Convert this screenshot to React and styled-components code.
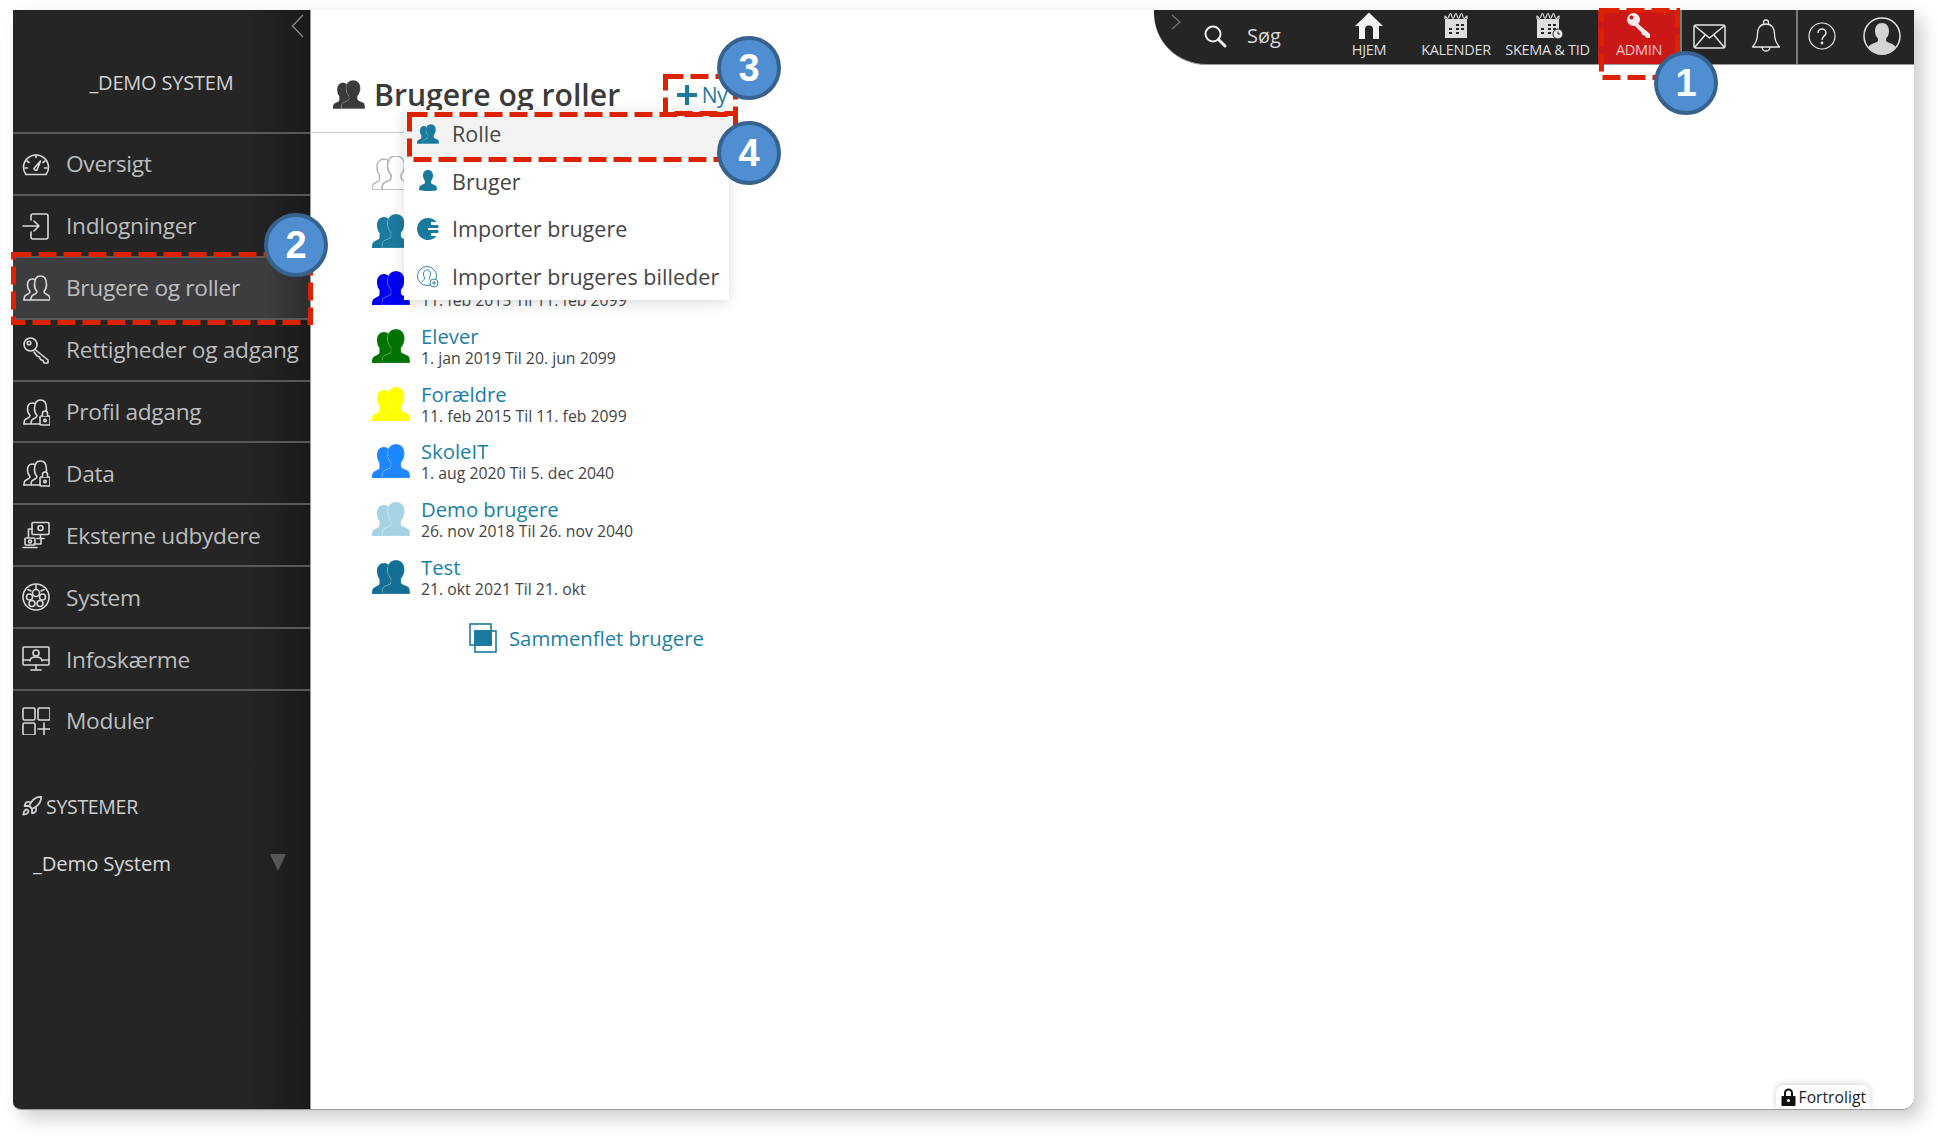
import React from 'react';
import styled, { createGlobalStyle } from 'styled-components';
import { Rocket } from 'lucide-react';

const Global = createGlobalStyle`
  html, body { margin: 0; height: 100%; overflow: hidden; background: #fff; }
  body { font-family: "Open Sans", "Liberation Sans", sans-serif; }
`

const Page = styled.div`
  position: relative;
  width: 1938px;
  height: 1138px;
  padding: 10px 24px 29px 13px;
  box-sizing: border-box;
`

const Frame = styled.div`
  display: flex;
  height: 100%;
  background: #fff;
  border-bottom: 1px solid #999;
  border-radius: 0 0 12px 8px;
  box-shadow: 8px 8px 18px rgba(0, 0, 0, .2);
  overflow: hidden;
`

const Sidebar = styled.aside`
  position: relative;
  flex: 0 0 298px;
  display: flex;
  flex-direction: column;
  background: linear-gradient(90deg, #252526 78%, #1a1a1b 100%);
  border-right: 1px solid #999;
  box-sizing: border-box;
  color: #c4c4c4;
`

const Collapse = styled.svg`
  position: absolute;
  top: 4px;
  right: 6px;
  width: 13px;
  height: 24px;
`

const Brand = styled.div`
  height: 122px;
  display: flex;
  align-items: center;
  justify-content: center;
  padding-top: 23px;
  box-sizing: border-box;
  font-size: 20px;
  letter-spacing: -.2px;
  color: #d2d2d2;
`

const NavRow = styled.div`
  height: 61.9px;
  display: flex;
  align-items: center;
  gap: 16px;
  padding-left: 9px;
  box-sizing: border-box;
  border-top: 2px solid #58585a;
  font-size: 22.7px;
  letter-spacing: -.3px;
  color: #bdbdbd;
  background: ${p => (p.$active ? 'linear-gradient(90deg, #3d3d3f 85%, #2d2d2e 100%)' : 'transparent')};
  svg { flex: 0 0 28px; width: 28px; height: 28px; color: #d8d8d8; }
`

const SystemsHead = styled.div`
  margin-top: 42px;
  display: flex;
  align-items: center;
  gap: 3px;
  padding-left: 8px;
  font-size: 19.5px;
  letter-spacing: -.3px;
  color: #cfcfcf;
  svg { width: 22px; height: 22px; }
`

const SystemRow = styled.div`
  margin-top: 29px;
  display: flex;
  align-items: center;
  justify-content: space-between;
  padding: 0 24px 0 20px;
  font-size: 20.3px;
  letter-spacing: -.15px;
  color: #d8d8d8;
`

const Caret = styled.span`
  width: 0;
  height: 0;
  border-left: 8px solid transparent;
  border-right: 8px solid transparent;
  border-top: 17px solid #565656;
`

const Main = styled.main`
  position: relative;
  flex: 1;
  display: flex;
  flex-direction: column;
  min-width: 0;
`

const Topbar = styled.header`
  align-self: flex-end;
  width: 760px;
  height: 55px;
  flex: 0 0 55px;
  display: flex;
  background: #252526;
  border-bottom: 1px solid #999;
  border-bottom-left-radius: 52px;
  box-sizing: border-box;
  color: #e4e4e4;
`

const SearchArea = styled.div`
  flex: 0 0 179px;
  display: flex;
  align-items: center;
  padding: 0 0 3px 17px;
  box-sizing: border-box;
  font-size: 20px;
  color: #d8d8d8;
  > svg:first-child { align-self: flex-start; margin-top: 4px; width: 11px; height: 16px; }
`

const SearchIcon = styled.svg`
  width: 24px;
  height: 24px;
  margin: 0 20px 0 21px;
`

const Tab = styled.div`
  flex: 0 0 ${p => p.$w}px;
  min-width: 0;
  display: flex;
  flex-direction: column;
  align-items: center;
  justify-content: space-between;
  padding: 2px 0 5px;
  box-sizing: border-box;
  font-size: 14.5px;
  letter-spacing: -.3px;
  line-height: 18px;
  white-space: nowrap;
  color: #dedede;
  svg { width: 30px; height: 27px; }
`

const AdminTab = styled(Tab)`
  margin-left: auto;
  background: #cc1717;
  color: #f1c7c7;
  svg { color: #f3e9e9; }
`

const IconGroup = styled.div`
  flex: 0 0 ${p => p.$w}px;
  display: flex;
  align-items: center;
  gap: ${p => p.$gap}px;
  padding: 0 0 2px ${p => p.$pad}px;
  border-left: 2px solid #7a7a7a;
  box-sizing: border-box;
  color: #e6e6e6;
`

const PageHead = styled.div`
  margin-left: 1px;
  width: 416px;
  height: 68px;
  flex: 0 0 68px;
  display: flex;
  align-items: center;
  gap: 9px;
  padding: 0 1px 8px 21px;
  box-sizing: border-box;
  border-bottom: 1px solid #cfcfcf;
`

const Title = styled.h1`
  margin: 0;
  font-size: 30.2px;
  font-weight: 600;
  color: #3b3b3b;
`

const NewLink = styled.a`
  margin-left: auto;
  display: flex;
  align-items: center;
  gap: 5px;
  font-size: 21px;
  letter-spacing: -.5px;
  color: #1b7a9e;
`

const GroupList = styled.div`
  padding: 15px 0 0 61px;
`

const GroupRow = styled.div`
  height: 57.7px;
  display: flex;
  gap: 11px;
  > svg { flex: 0 0 38px; width: 38px; height: 34px; margin-top: 8px; }
`

const GroupName = styled.div`
  height: 27px;
  font-size: 20.3px;
  line-height: 30px;
  color: #1b7fa3;
`

const GroupDates = styled.div`
  font-size: 15.8px;
  line-height: 20px;
  color: #444;
`

const MergeLink = styled.a`
  margin: 13px 0 0 158px;
  display: flex;
  align-items: center;
  gap: 12px;
  font-size: 20.3px;
  color: #1b7fa3;
`

const Menu = styled.div`
  position: absolute;
  top: 100px;
  left: 93px;
  width: 325px;
  background: #fff;
  border-radius: 0 0 8px 8px;
  box-shadow: 0 3px 14px rgba(0, 0, 0, .14);
`

const MenuItem = styled.div`
  height: 47.6px;
  display: flex;
  align-items: center;
  gap: 13px;
  padding-left: 13px;
  box-sizing: border-box;
  font-size: 21.5px;
  letter-spacing: .05px;
  white-space: nowrap;
  color: #454545;
  background: ${p => (p.$active ? '#f3f3f3' : '#fff')};
  svg { flex: 0 0 22px; width: 22px; height: 22px; color: #1a7a9e; }
`

const Confidential = styled.div`
  margin: auto 44px 0 auto;
  height: 24px;
  display: flex;
  align-items: center;
  gap: 3px;
  padding: 0 4px 0 5px;
  background: #fff;
  border-radius: 8px 8px 0 0;
  box-shadow: 0 -1px 6px rgba(0, 0, 0, .18);
  font-size: 15.7px;
  color: #222;
  svg { width: 15px; height: 18px; }
`

const DashBox = styled.svg`
  position: absolute;
  left: ${p => p.$x}px;
  top: ${p => p.$y}px;
  width: ${p => p.$w}px;
  height: ${p => p.$h}px;
  overflow: visible;
`

const Badge = styled.div`
  position: absolute;
  left: ${p => p.$x}px;
  top: ${p => p.$y}px;
  width: 64px;
  height: 64px;
  display: flex;
  align-items: center;
  justify-content: center;
  box-sizing: border-box;
  border-radius: 50%;
  background: #4f8fd1;
  border: 4px solid #37628f;
  font-family: "Liberation Sans", Arial, sans-serif;
  font-size: 38px;
  font-weight: 700;
  color: #fff;
`

const Line = ({ children }) => (
  <svg viewBox="0 0 28 28" fill="none" stroke="currentColor" strokeWidth="1.6" strokeLinecap="round" strokeLinejoin="round">
    {children}
  </svg>
)

const FRONT = 'M24 0c5 0 8.5 3.6 8.5 9.5 0 4-1.6 7.2-3.5 9.2v3.3c0 1.4.8 2 2.2 2.6l4.3 2c1.6.8 2.5 2 2.5 7.4H10c0-5.4.9-6.6 2.5-7.4l4.3-2c1.4-.6 2.2-1.2 2.2-2.6v-3.3c-1.9-2-3.5-5.2-3.5-9.2C15.5 3.6 19 0 24 0z'
const BACK = 'M12 3c2 0 3.6.7 4.8 2-1 1.300-1.300 2.800-1.300 4.500 0 4 1.600 7.200 3.500 9.200v3.300c0 1.400-.8 2-2.200 2.600l-4.300 2C11 27.400 10 29 10 34H0c0-4.600.8-5.800 2.300-6.600l3.500-1.800c1.200-.6 1.700-1.200 1.700-2.400V19C6 17.500 5 14.500 5 11 5 6 8 3 12 3z'

const People = ({ color, outline }) => (
  <svg viewBox="0 0 38 34">
    {outline ? (
      <g fill="none" stroke={color} strokeWidth="1.4">
        <path d={FRONT} />
        <path d={BACK} />
      </g>
    ) : (
      <g fill={color}>
        <path d={BACK} />
        <path d={FRONT} stroke="#fff" strokeOpacity=".35" strokeWidth=".6" />
      </g>
    )}
  </svg>
)

const PeopleLine = ({ lock }) => (
  <Line>
    <path d="M2 26c0-4 1-4.500 4-6 1.500-.7 2-1.300 2-2.500-1.500-1.500-2.500-3.500-2.500-6.500C5.500 7 7.500 5 10.500 5c1 0 1.800.2 2.500.6" />
    <path d="M9 26c0-4 1-4.500 4-6 1.500-.7 2-1.300 2-2.500-1.500-1.500-2.500-3.500-2.500-7C12.500 5 15 2 18.500 2S24.500 5 24.500 10.500c0 3.500-1 5.500-2.500 7 0 1.200.5 1.800 2 2.500 3 1.500 4 2 4 6H2" />
    {lock && (
      <g fill="#252526">
        <rect x="18" y="18" width="10" height="9" rx="1" />
        <path d="M20.500 18v-2.500a2.500 2.500 0 0 1 5 0V18" />
        <circle cx="23" cy="22.500" r="1.200" />
      </g>
    )}
  </Line>
)

const nav = [
  ['Oversigt', <Line key="i">
    <path d="M4 24.500C2.500 22.500 1.500 20 1.500 17.500a12.500 12.500 0 0 1 25 0c0 2.500-1 5-2.500 7" />
    <path d="M4 24.500h20M14 5v2.500M5 11l2 1.500M23 11l-2 1.500M3 18h2.500M25 18h-2.500" />
    <path d="M12 18.500 18.500 11l-3.500 9a2 2 0 0 1-3-1.500z" />
  </Line>],
  ['Indlogninger', <Line key="i">
    <path d="M9 8V4a2 2 0 0 1 2-2h13a2 2 0 0 1 2 2v21a2 2 0 0 1-2 2H11a2 2 0 0 1-2-2v-5" />
    <path d="M1 14h16M12 9l5 5-5 5" />
  </Line>],
  ['Brugere og roller', <PeopleLine key="i" />],
  ['Rettigheder og adgang', <Line key="i">
    <circle cx="8.500" cy="8.500" r="6.500" />
    <circle cx="7" cy="7" r="1.800" />
    <path d="M13 13.500 26 24v3h-4l-1-2.500-2.500-1-1-2.500-2.500-1-3-4" />
  </Line>],
  ['Profil adgang', <PeopleLine key="i" lock />],
  ['Data', <PeopleLine key="i" lock />],
  ['Eksterne udbydere', <Line key="i">
    <rect x="10" y="1.500" width="17" height="12" rx="1" />
    <circle cx="18.500" cy="7" r="2.500" />
    <path d="M18.500 14v3M15 17.500h7M10 8H6.500v8M19 18v5h-7" />
    <rect x="3" y="17" width="10" height="7" rx="1" />
    <path d="M1 26.500h14" />
    <circle cx="8" cy="20.500" r="1.500" />
  </Line>],
  ['System', <Line key="i">
    <circle cx="14" cy="14" r="13" />
    <circle cx="14" cy="10" r="3.500" />
    <circle cx="7.500" cy="14" r="3" />
    <circle cx="20.500" cy="14" r="3" />
    <circle cx="10" cy="20.500" r="3" />
    <circle cx="18" cy="20.500" r="3" />
    <path d="M6 6.500 9 8M22 6.500 19 8M14 2v4" />
  </Line>],
  ['Infoskærme', <Line key="i">
    <rect x="1" y="2" width="26" height="18" rx="1" />
    <circle cx="14" cy="8" r="3" />
    <path d="M8 16c0-3 3-4 6-4s6 1 6 4M1 15h6M21 15h6M14 20v4M9 25h10" />
  </Line>],
  ['Moduler', <Line key="i">
    <rect x="1" y="1" width="12" height="12" rx="1.500" />
    <rect x="16" y="1" width="12" height="12" rx="1.500" />
    <rect x="1" y="16" width="12" height="12" rx="1.500" />
    <path d="M22 16v12M16 22h12" />
  </Line>],
]

const groups = [
  { color: '#b5b5b5', outline: true },
  { color: '#1b7a9e' },
  { color: '#0000f0', dates: '11. feb 2015 Til 11. feb 2099' },
  { color: '#007300', name: 'Elever', dates: '1. jan 2019 Til 20. jun 2099' },
  { color: '#ffff00', name: 'Forældre', dates: '11. feb 2015 Til 11. feb 2099' },
  { color: '#1e87ff', name: 'SkoleIT', dates: '1. aug 2020 Til 5. dec 2040' },
  { color: '#a6d3e4', name: 'Demo brugere', dates: '26. nov 2018 Til 26. nov 2040' },
  { color: '#146f96', name: 'Test', dates: '21. okt 2021 Til 21. okt' },
]

const CalendarIcon = ({ clock }) => (
  <svg viewBox="0 0 30 27">
    <path fill="currentColor" d="M4 7h22v19H4z" />
    <path fill="none" stroke="currentColor" strokeWidth="1.200" d="M4 7V4c1.500 0 1 2.500 2.500 2.500S8 1.500 9.500 1.500 10.500 6.500 12 6.500s1.500-5 3-5 1 5 2.500 5 1.500-5 3-5 1 5 2.500 5S25 4 26 4v3" />
    <path fill="#252526" d="M15 12h3v2h-3zM20 12h3v2h-3zM8 16h3v2H8zM15 16h3v2h-3zM20 16h3v2h-3zM8 20h3v2H8zM15 20h3v2h-3z" />
    {clock && (
      <g>
        <circle cx="25" cy="22" r="5" fill="#e8e8e8" stroke="#252526" />
        <path d="M25 19.500V22h2" fill="none" stroke="#252526" />
      </g>
    )}
  </svg>
)

const Dashes = ({ x, y, w, h }) => (
  <DashBox $x={x} $y={y} $w={w} $h={h} viewBox={`0 0 ${w} ${h}`}>
    <rect x="2.500" y="2.500" width={w - 5} height={h - 5} fill="none" stroke="#dd2200" strokeWidth="5" strokeDasharray="18 7" />
  </DashBox>
)

export default function App() {
  return (
    <Page>
      <Global />
      <Frame>
        <Sidebar>
          <Collapse viewBox="0 0 13 24" fill="none" stroke="#8c8c8c" strokeWidth="1.300"><path d="M12 1 1.500 12 12 23" /></Collapse>
          <Brand>_DEMO SYSTEM</Brand>
          {nav.map(([label, icon], idx) =>
            <NavRow key={idx} $active={label === 'Brugere og roller'}>
              {icon}
              {label}
            </NavRow>
          )}
          <SystemsHead><Rocket strokeWidth={2} />SYSTEMER</SystemsHead>
          <SystemRow>_Demo System<Caret /></SystemRow>
        </Sidebar>
        <Main>
          <Topbar>
            <SearchArea>
              <svg viewBox="0 0 11 16" fill="none" stroke="#777" strokeWidth="1.200"><path d="M1 1l8 7-8 7" /></svg>
              <SearchIcon viewBox="0 0 24 24" fill="none" stroke="#eee">
                <circle cx="10" cy="10" r="7.500" strokeWidth="2" />
                <path d="M15.500 15.500 22 22" strokeWidth="3" strokeLinecap="round" />
              </SearchIcon>
              Søg
            </SearchArea>
            <Tab $w={72}>
              <svg viewBox="0 0 30 27"><path fill="#f2f2f2" d="M15 .5 29 14h-4v13h-6V17.500a4 4 0 0 0-8 0V27H5V14H1z" /></svg>
              HJEM
            </Tab>
            <Tab $w={102}><CalendarIcon />KALENDER</Tab>
            <Tab $w={81}><CalendarIcon clock />SKEMA &amp; TID</Tab>
            <AdminTab $w={82}>
              <svg viewBox="0 0 30 27">
                <circle cx="9.500" cy="7.500" r="6.500" fill="currentColor" />
                <path fill="currentColor" d="M12 10 26 22v4h-3.500l-2-2.500-2.500-.5-.5-2.500L10 13z" />
                <circle cx="7.500" cy="5.500" r="1.900" fill="#cc1717" />
              </svg>
              ADMIN
            </AdminTab>
            <IconGroup $w={116} $gap={25} $pad={11}>
              <svg width="33" height="25" viewBox="0 0 33 25" fill="none" stroke="currentColor" strokeWidth="1.500">
                <rect x="1" y="1" width="31" height="23" rx="2" />
                <path d="M2 2 16.500 14 31 2M2 23l10.500-12.500M31 23 20.500 10.500" />
              </svg>
              <svg width="30" height="34" viewBox="0 0 30 34" fill="none" stroke="currentColor" strokeWidth="1.300" strokeLinejoin="round">
                <path d="M15 5c-6 0-8.500 4.500-8.500 10 0 6-1.500 9-5 13h27c-3.500-4-5-7-5-13 0-5.500-2.500-10-8.500-10z" />
                <path d="M12.500 5.500V3.500a2.500 2.500 0 0 1 5 0v2M11 28c0 2.500 2 4 4 4s4-1.500 4-4" />
              </svg>
            </IconGroup>
            <IconGroup $w={118} $gap={27} $pad={10}>
              <svg width="28" height="28" viewBox="0 0 28 28" fill="none" stroke="currentColor" strokeWidth="1.200">
                <circle cx="14" cy="14" r="13" />
                <path d="M10 11c0-2.500 2-4 4-4s4 1.500 4 4c0 3-4 3-4 7" strokeWidth="1.500" />
                <circle cx="14" cy="21" r=".8" fill="currentColor" />
              </svg>
              <svg width="38" height="38" viewBox="0 0 38 38">
                <circle cx="19" cy="19" r="18" fill="#252526" stroke="#e4e4e4" strokeWidth="1.500" />
                <path fill="#d4d4d4" d="M19 6c4.500 0 7 3.500 7 8 0 3-1 5.500-3 7.500v2c0 1 2 2 5 3 2.500 1 4 2 5 4a17 17 0 0 1-28 0c1-2 2.500-3 5-4 3-1 5-2 5-3v-2c-2-2-3-4.500-3-7.500 0-4.500 2.500-8 7-8z" />
              </svg>
            </IconGroup>
          </Topbar>
          <PageHead>
            <svg width="32" height="29" viewBox="0 0 38 34"><g fill="#3a3a3a"><path d={BACK} /><path d={FRONT} stroke="#fff" strokeOpacity=".35" strokeWidth=".6" /></g></svg>
            <Title>Brugere og roller</Title>
            <NewLink>
              <svg width="20" height="20" viewBox="0 0 20 20"><path fill="#1b7a9e" d="M8 0h4v8h8v4h-8v8H8v-8H0V8h8z" /></svg>
              Ny
            </NewLink>
          </PageHead>
          <GroupList>
            {groups.map((g, idx) =>
              <GroupRow key={idx}>
                <People color={g.color} outline={g.outline} />
                <div>
                  <GroupName>{g.name}</GroupName>
                  <GroupDates>{g.dates}</GroupDates>
                </div>
              </GroupRow>
            )}
          </GroupList>
          <MergeLink>
            <svg width="28" height="30" viewBox="0 0 28 30" fill="none" stroke="#1b7a9e" strokeWidth="1.600">
              <rect x="1" y="1" width="21" height="21" />
              <rect x="6" y="8" width="21" height="21" />
              <rect x="6" y="8" width="16" height="14" fill="#1b7a9e" />
            </svg>
            Sammenflet brugere
          </MergeLink>
          <Menu>
            <MenuItem $active>
              <svg viewBox="0 0 38 34"><g fill="currentColor"><path d={BACK} /><path d={FRONT} stroke="#fff" strokeOpacity=".35" strokeWidth=".6" /></g></svg>
              Rolle
            </MenuItem>
            <MenuItem>
              <svg viewBox="0 0 22 22"><path fill="currentColor" d="M11 0c3 0 5 2.200 5 5.500 0 2.500-1 4.500-2 5.500v1.500c0 1 1 1.600 3 2.200 2 .7 3 1.800 3 5.300-2 1.300-16 1.300-18 0 0-3.500 1-4.600 3-5.300 2-.6 3-1.200 3-2.200V11C7 10 6 8 6 5.500 6 2.200 8 0 11 0z" /></svg>
              Bruger
            </MenuItem>
            <MenuItem>
              <svg viewBox="0 0 22 22"><path fill="currentColor" fillRule="evenodd" d="M11 0a11 11 0 0 1 8.500 4H14v3h7a11 11 0 0 1 .5 3H11v2h10.500a11 11 0 0 1-.5 3h-7v3h5.500A11 11 0 1 1 11 0z" /></svg>
              Importer brugere
            </MenuItem>
            <MenuItem>
              <svg viewBox="0 0 22 22" fill="none" stroke="currentColor" strokeWidth=".9">
                <circle cx="10" cy="10" r="9.500" />
                <path d="M5 16c0-2 3-2 3-4-1-1-1.500-2.500-1.500-4C6.500 5.500 8 4 10 4s3.500 1.500 3.500 4c0 1.500-.5 3-1.500 4 0 1 .5 1.500 1.500 2" />
                <circle cx="17" cy="17" r="4" fill="#fff" />
                <path d="M17 15v4M15 17h4" />
              </svg>
              Importer brugeres billeder
            </MenuItem>
          </Menu>
          <Confidential>
            <svg viewBox="0 0 15 18"><path fill="#111" fillRule="evenodd" d="M3 8V5a4.500 4.500 0 0 1 9 0v3h1.500a1 1 0 0 1 1 1v8a1 1 0 0 1-1 1h-12a1 1 0 0 1-1-1V9a1 1 0 0 1 1-1zm2 0h5V5a2.500 2.500 0 0 0-5 0zm2.500 3a1.500 1.500 0 1 0 0 3 1.500 1.500 0 0 0 0-3z" /></svg>
            Fortroligt
          </Confidential>
        </Main>
      </Frame>
      <Dashes x={1599} y={8} w={81} h={72} />
      <Dashes x={11} y={252} w={302} h={73} />
      <Dashes x={663} y={74} w={75} h={42} />
      <Dashes x={407} y={112} w={331} h={50} />
      <Badge $x={1654} $y={51}>1</Badge>
      <Badge $x={264} $y={213}>2</Badge>
      <Badge $x={717} $y={36}>3</Badge>
      <Badge $x={717} $y={121}>4</Badge>
    </Page>
  )
}
